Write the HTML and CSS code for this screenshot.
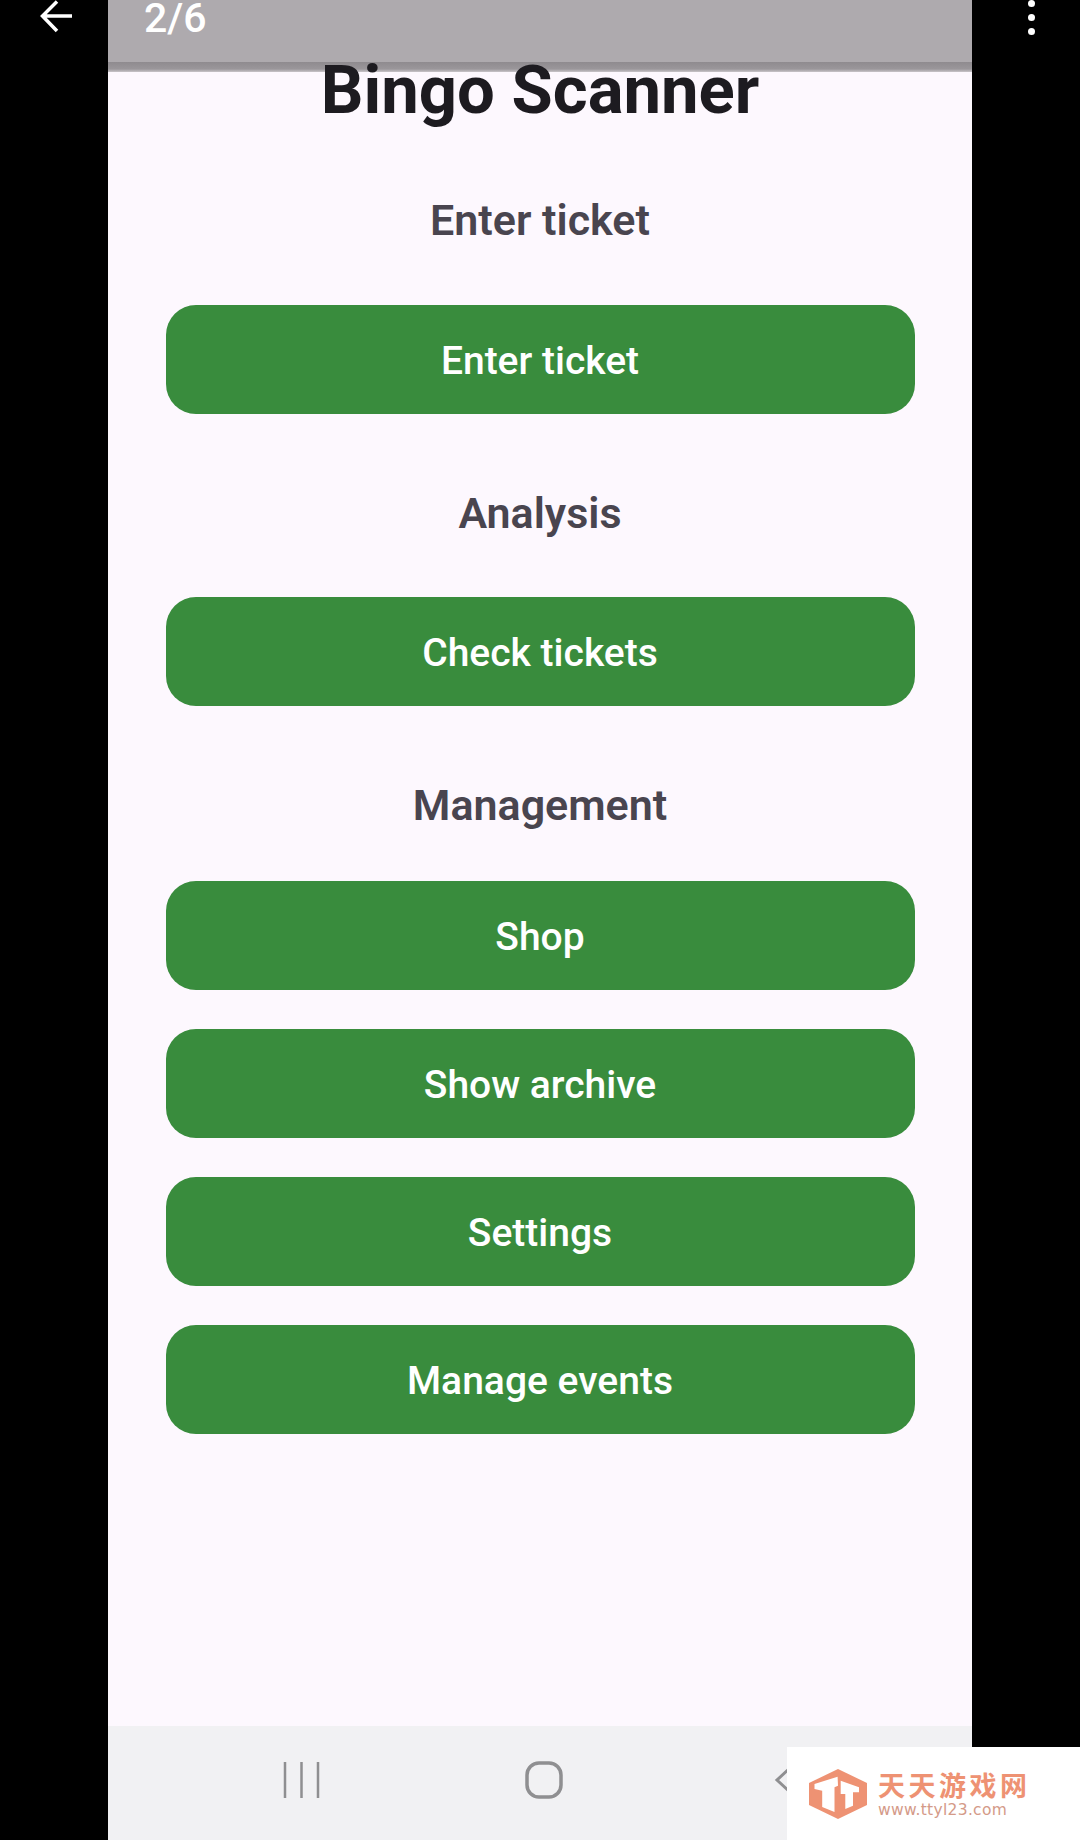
FILE: index.html
```html
<!DOCTYPE html>
<html lang="en">
<head>
<meta charset="utf-8">
<title>Bingo Scanner</title>
<link rel="stylesheet" href="styles.css">
</head>
<body>
<div class="viewer">
  <div class="side side-left">
    <svg class="back" width="40" height="34" viewBox="0 0 40 34"><path d="M35 16H6M20 1.500 5.500 16 20 31" fill="none" stroke="#fff" stroke-width="3.500"/></svg>
  </div>
  <main class="screen">
    <header class="topbar"><span class="counter">2/6</span></header>
    <div class="shadow"></div>
    <div class="content">
      <h1 class="title">Bingo Scanner</h1>
      <h2 class="heading first">Enter ticket</h2>
      <button class="btn">Enter ticket</button>
      <h2 class="heading">Analysis</h2>
      <button class="btn">Check tickets</button>
      <h2 class="heading last">Management</h2>
      <div class="stack">
        <button class="btn">Shop</button>
        <button class="btn">Show archive</button>
        <button class="btn">Settings</button>
        <button class="btn">Manage events</button>
      </div>
    </div>
    <nav class="navbar">
      <svg class="nav-recent" width="38" height="38" viewBox="0 0 38 38"><path d="M2 1v36M18.500 1v36M35 1v36" stroke="#8f8f91" stroke-width="2.500" fill="none"/></svg>
      <svg class="nav-home" width="38" height="38" viewBox="0 0 38 38"><rect x="2" y="2" width="34" height="34" rx="12" stroke="#8f8f91" stroke-width="3.500" fill="none"/></svg>
      <svg class="nav-backkey" width="20" height="32" viewBox="0 0 20 32"><path d="M18 3 4 16l14 13" stroke="#8f8f91" stroke-width="3" fill="none"/></svg>
    </nav>
  </main>
  <div class="side side-right">
    <span class="dot"></span><span class="dot"></span><span class="dot"></span>
  </div>
</div>
<aside class="watermark">
  <svg class="wm-logo" width="58" height="50" viewBox="0 0 58 50">
    <path d="M29 0 58 14v22L29 50 0 36V14Z" fill="#ee9273"/>
    <path d="M5.500 15 28.600 7.700 29 16.700 25.500 18.300V43L13.200 38V21.700L5.500 20Z" fill="#fff"/>
    <path d="M31.700 11.700 50 18.300V23.300H44V36.700L36.300 40V25H31.700Z" fill="#fff"/>
  </svg>
  <div class="wm-text">
    <span class="wm-cn">天天游戏网</span>
    <span class="wm-url">www.ttyl23.com</span>
  </div>
</aside>
</body>
</html>
```

FILE: styles.css
```css
* { box-sizing: border-box; }
html, body { margin: 0; padding: 0; }
body {
  width: 1080px;
  height: 1840px;
  background: #000;
  overflow: hidden;
  position: relative;
  font-family: Roboto, "Noto Sans", sans-serif;
}
.viewer { display: flex; height: 1840px; }
.side { width: 108px; flex: none; }
.side-left { padding: 0 0 0 37px; }
.back { display: block; }
.side-right {
  display: flex;
  flex-direction: column;
  align-items: center;
  gap: 7px;
  padding: 0 0 0 10px;
}
.dot { width: 7px; height: 7px; border-radius: 50%; background: #fff; }
.screen {
  width: 864px;
  flex: none;
  height: 1840px;
  background: #fdf8fe;
  display: flex;
  flex-direction: column;
}
.topbar {
  height: 62px;
  flex: none;
  background: #aeaaae;
  padding-left: 36px;
}
.counter {
  display: block;
  font-size: 41px;
  line-height: 36px;
  font-weight: 500;
  color: #fff;
}
.shadow {
  height: 10px;
  flex: none;
  background: linear-gradient(#8f8b8f, #9a969a 70%, #c9c5c9);
}
.content {
  flex: 1;
  display: flex;
  flex-direction: column;
  align-items: center;
  padding: 0 57.500px;
  margin-top: -18px;
}
.title {
  margin: 0;
  font-size: 67px;
  line-height: 72px;
  font-weight: 700;
  color: #1d1b20;
}
.heading {
  margin: 0;
  font-size: 43px;
  line-height: 48px;
  font-weight: 600;
  color: #49454f;
  padding: 75px 0 60px;
}
.heading.first { padding: 70px 0 61px; }
.heading.last { padding-bottom: 52px; }
.btn {
  display: block;
  width: 100%;
  height: 109px;
  flex: none;
  border: 0;
  border-radius: 30px;
  background: #398c3d;
  color: #fff;
  font-family: inherit;
  font-size: 39px;
  font-weight: 500;
  padding: 3px 0 0;
}
.stack { width: 100%; display: flex; flex-direction: column; gap: 39px; }
.navbar {
  height: 114px;
  flex: none;
  background: #f1f1f3;
  display: flex;
  align-items: center;
  padding-bottom: 6px;
}
.nav-recent { margin-left: 175px; }
.nav-home { margin-left: 204px; }
.nav-backkey { margin-left: 210px; }
.watermark {
  position: absolute;
  right: 0;
  bottom: 0;
  width: 293px;
  height: 93px;
  background: #fff;
  display: flex;
  align-items: center;
  gap: 11px;
  padding: 0 0 0 22px;
}
.wm-text { display: flex; flex-direction: column; gap: 2px; }
.wm-cn {
  font-family: "Noto Sans CJK SC", sans-serif;
  font-weight: 700;
  font-size: 27px;
  line-height: 30px;
  color: #ee9273;
  letter-spacing: 3.500px;
}
.wm-url {
  font-size: 15.500px;
  line-height: 16px;
  color: #d49a88;
  font-family: "DejaVu Sans", sans-serif;
  letter-spacing: .3px;
}
```
